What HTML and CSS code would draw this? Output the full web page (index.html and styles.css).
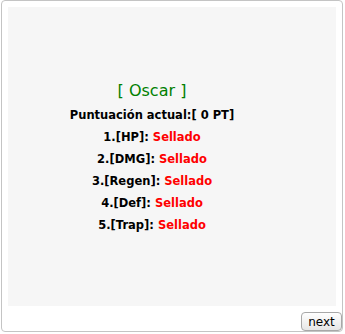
FILE: index.html
```html
<!DOCTYPE html>
<html lang="es">
<head>
    <meta charset="UTF-8">
    <title>Oscar</title>
    <link rel="stylesheet" href="styles.css">
</head>
<body>
    <div class="box">
        <div class="panel">
            <div class="info">
                <div class="name">[ Oscar ]</div>
                <div class="line">Puntuación actual:[ 0 PT]</div>
                <div class="line">1.[HP]: <span class="sealed">Sellado</span></div>
                <div class="line">2.[DMG]: <span class="sealed">Sellado</span></div>
                <div class="line">3.[Regen]: <span class="sealed">Sellado</span></div>
                <div class="line">4.[Def]: <span class="sealed">Sellado</span></div>
                <div class="line">5.[Trap]: <span class="sealed">Sellado</span></div>
            </div>
        </div>
        <div class="footer">
            <button class="next">next</button>
        </div>
    </div>
</body>
</html>
```

FILE: styles.css
```css
body {
    margin: 0;
    font-family: 'DejaVu Sans', Verdana, sans-serif;
    background-color: #fff;
}
.box {
    width: 342px;
    height: 332px;
    margin-left: 1px;
    border: 1px solid #c4c4c4;
    border-radius: 4px;
    box-sizing: border-box;
    padding: 6px 6px 0 6px;
    display: flex;
    flex-direction: column;
}
.panel {
    height: 299px;
    background-color: #f6f6f6;
    display: flex;
    justify-content: center;
    padding-right: 40px;
    box-sizing: border-box;
}
.info {
    margin-top: 74px;
    text-align: center;
}
.name {
    color: #008000;
    font-size: 16px;
    line-height: 20px;
    margin-bottom: 3px;
}
.line {
    font-size: 11.5px;
    font-weight: bold;
    line-height: 22px;
    color: #000;
}
.sealed {
    color: #ff0000;
}
.footer {
    display: flex;
    justify-content: flex-end;
    padding-top: 6px;
}
.next {
    font-family: 'DejaVu Sans', Verdana, sans-serif;
    font-size: 12px;
    height: 19px;
    width: 41px;
    padding: 0;
    margin-right: -6px;
    border: 1px solid #a8a8a8;
    border-radius: 4px;
    background: linear-gradient(#ffffff, #e6e6e6);
    color: #000;
}
```
